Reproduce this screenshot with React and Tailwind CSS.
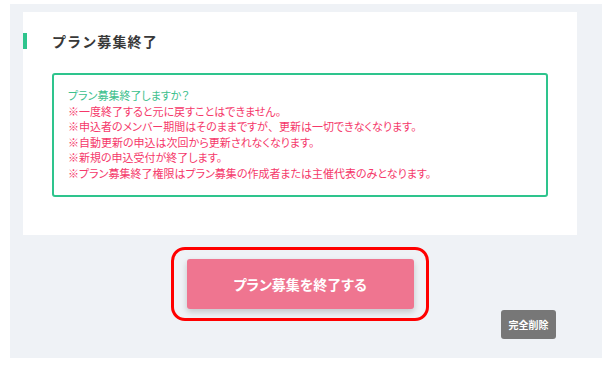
export default function App() {
  const jp = { fontFamily: '"Noto Sans CJK JP", "Noto Sans", sans-serif' };
  const lines = [
    "※一度終了すると元に戻すことはできません。",
    null,
    "※自動更新の申込は次回から更新されなくなります。",
    "※新規の申込受付が終了します。",
    "※プラン募集終了権限はプラン募集の作成者または主催代表のみとなります。",
  ];
  return (
    <div className="w-[611px] h-[367px] bg-white pt-[4px] pl-[10px]" style={jp}>
      <div className="w-[592px] h-[354px] bg-[#eff2f6] pt-[8px] pl-[13px] pr-[25px] flex flex-col">
        <div className="h-[223px] bg-white flex flex-col">
          <div className="mt-[21px] h-[16px] border-l-[4px] border-[#2ec48d] pl-[25px] flex items-center">
            <span className="text-[14px] font-bold text-[#383838] tracking-[0.08em] leading-none">プラン募集終了</span>
          </div>
          <div className="mt-[24px] mx-[29px] h-[124px] border-2 border-[#2ec48d] rounded-[3px] pt-[13px] pl-[14px] text-[11px] leading-[15.5px] [font-feature-settings:'palt']">
            <div className="text-[#3cc08c]">プラン募集終了しますか？</div>
            {lines.map((l, i) =>
              l === null ? (
                <div key={i} className="text-[#f5386a]">
                  ※申込者のメンバー期間はそのままですが
                  <span className="[font-feature-settings:normal]">、</span>
                  更新は一切できなくなります。
                </div>
              ) : (
                <div key={i} className="text-[#f5386a]">{l}</div>
              )
            )}
          </div>
        </div>
        <div className="w-[554px] flex justify-center mt-[12px]">
          <div className="w-[258px] h-[74px] border-[3px] border-[#ff0000] rounded-[14px] flex items-center justify-center">
            <button className="w-[227px] h-[50px] bg-[#ef7590] rounded-[3px] text-white text-[14px] font-bold shadow-[0_3px_6px_rgba(0,0,0,0.18)] [font-feature-settings:'palt']">
              プラン募集を終了する
            </button>
          </div>
        </div>
        <div className="w-[554px] flex justify-end mt-[-11px] pr-[21px]">
          <button className="w-[55px] h-[29px] bg-[#777777] rounded-[3px] text-white text-[10px] font-bold">
            完全削除
          </button>
        </div>
      </div>
    </div>
  );
}
